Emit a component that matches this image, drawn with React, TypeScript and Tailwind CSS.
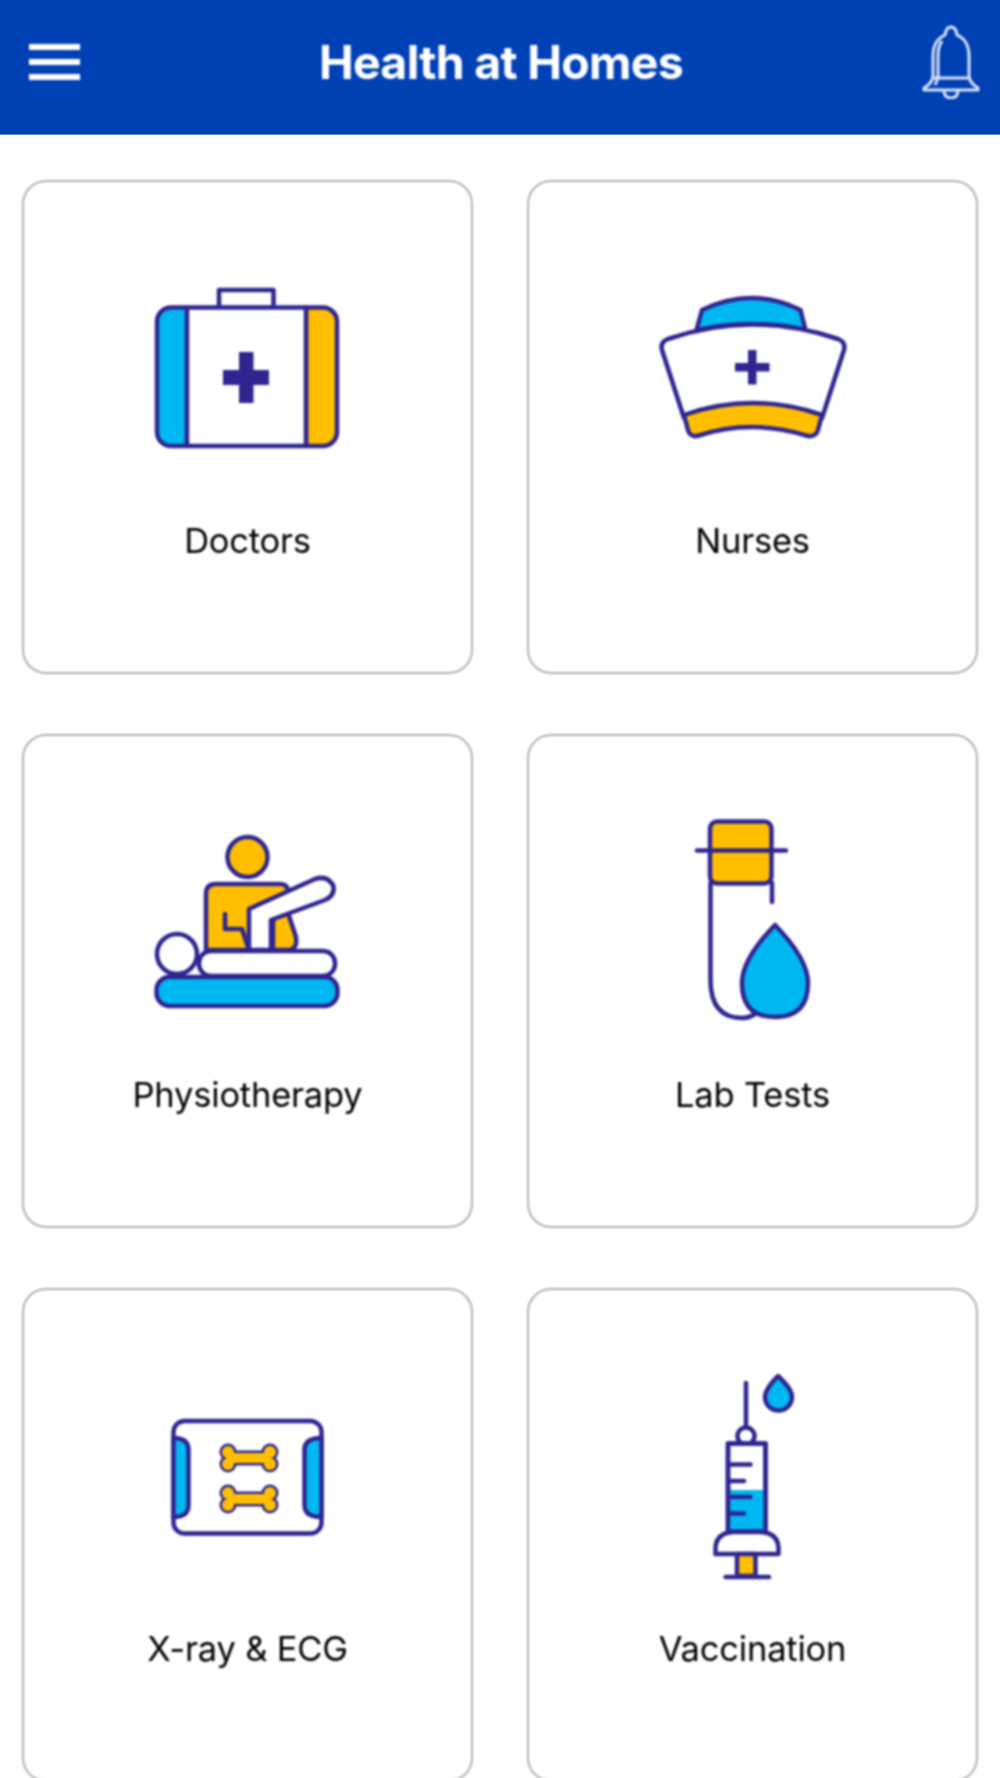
import React from "react";

const NAVY = "#2e2590";
const BLUE = "#00b8f1";
const YELLOW = "#ffbf00";

// All icons share one 220x220 box, centred in the card
const IconBox: React.FC<{ children: React.ReactNode }> = ({ children }) => (
  <svg
    viewBox="0 0 220 220"
    className="h-[220px] w-[220px]"
    fill="none"
    stroke={NAVY}
    strokeWidth={4.5}
    strokeLinejoin="round"
    strokeLinecap="round"
  >
    {children}
  </svg>
);

const DoctorsIcon = () => (
  <IconBox>
    <g transform="translate(-1 0)">
      <rect x="82" y="32" width="54.5" height="18" fill="#fff" />
      <path d="M50 49.5H34a14 14 0 0 0-14 14V174a14 14 0 0 0 14 14h16z" fill={BLUE} />
      <path d="M169 49.5h17a14 14 0 0 1 14 14V174a14 14 0 0 1-14 14h-17z" fill={YELLOW} />
      <rect x="50" y="49.5" width="119" height="138.5" fill="#fff" />
      <path
        d="M102 94h14.500v18h15.500v15h-15.500v18h-14.500v-18h-16v-15h16z"
        fill={NAVY}
        stroke="none"
      />
    </g>
  </IconBox>
);

const NursesIcon = () => (
  <IconBox>
    <path d="M53.500 72L59 52Q109 28 157.500 52L162.500 72Q109 60 53.500 72z" fill={BLUE} />
    <path
      d="M25 81Q109 52 195 81Q203 84 201 92L179 160Q109 132 41 160L19 92Q17 84 25 81z"
      fill="#fff"
    />
    <path
      d="M41 157Q109 133 179 157L175 172Q173 179 165 178Q109 160 54 178Q47 179 45 172z"
      fill={YELLOW}
    />
    <path
      d="M105 92h8.500v13h13v8.500h-13v13h-8.500v-13h-13v-8.500h13z"
      fill={NAVY}
      stroke="none"
    />
  </IconBox>
);

const PhysioIcon = () => (
  <IconBox>
    <circle cx="109.500" cy="45" r="20" fill={YELLOW} />
    <path d="M135 106l15-5 8 24q2 13-9 13h-14z" fill={YELLOW} />
    <path
      d="M68 138V82q0-10 10-10h64q8 0 8 8l-30 40v18z"
      fill={YELLOW}
    />
    <path d="M87 102v15h17l7 21" />
    <path
      d="M111 138V97l66-30q12-4 18 6 3 10-8 15l-54 20v30z"
      fill="#fff"
    />
    <rect x="61" y="139" width="136" height="25" rx="12" fill="#fff" />
    <circle cx="39" cy="142" r="20" fill="#fff" />
    <rect x="18.500" y="165" width="181" height="29" rx="13" fill={BLUE} />
  </IconBox>
);

const LabIcon = () => (
  <IconBox>
    <path d="M67.500 71v97q0 38 32 38 8 0 15-6M129 71v19" />
    <rect x="67" y="9.500" width="61.500" height="62" rx="7" fill={YELLOW} />
    <path d="M54 38.500h89" />
    <path
      d="M132 113Q165 147 165 171q0 34-33 34T99 171q0-24 33-58z"
      fill={BLUE}
    />
  </IconBox>
);

const Bone: React.FC<{ y: number }> = ({ y }) => {
  const parts = (
    <>
      <circle cx="-21" cy="-6" r="6" />
      <circle cx="-21" cy="6" r="6" />
      <circle cx="21" cy="-6" r="6" />
      <circle cx="21" cy="6" r="6" />
      <rect x="-22" y="-5" width="44" height="10" />
    </>
  );
  return (
    <g transform={`translate(111 ${y})`}>
      <g fill={NAVY} stroke={NAVY} strokeWidth={5}>{parts}</g>
      <g fill={YELLOW} stroke="none">{parts}</g>
    </g>
  );
};

const XrayIcon = () => (
  <IconBox>
    <g transform="translate(-1.500 0)">
      <rect x="37" y="55" width="148" height="112.500" rx="11" fill="#fff" />
      <path d="M37 72q15 0 15 12v55q0 12-15 12z" fill={BLUE} />
      <path d="M185 72q-17 0-17 12v55q0 12 17 12z" fill={BLUE} />
    </g>
    <Bone y={92} />
    <Bone y={133} />
  </IconBox>
);

const VaccineIcon = () => (
  <IconBox>
    <path d="M103 17v44" />
    <circle cx="103" cy="70" r="8.500" fill="#fff" />
    <rect x="85" y="77.500" width="37.500" height="88" fill="#fff" />
    <rect x="85" y="124" width="37.500" height="41.500" fill={BLUE} stroke="none" />
    <path d="M85 77.500h37.500v88H85z" />
    <path d="M85 98.500h22.500M85 115h16M85 131h22.500M85 147.500h16" />
    <path
      d="M72.500 188v-5q0-16 18-17h27q18 1 18 17v5z"
      fill="#fff"
    />
    <rect x="94" y="188" width="18.500" height="22" fill={YELLOW} />
    <path d="M82.500 211h43.500" />
    <path
      d="M135 10q14 13 14 21a13.500 13.500 0 0 1-27 0q0-8 13-21z"
      fill={BLUE}
    />
  </IconBox>
);

const services = [
  { label: "Doctors", icon: <DoctorsIcon /> },
  { label: "Nurses", icon: <NursesIcon /> },
  { label: "Physiotherapy", icon: <PhysioIcon /> },
  { label: "Lab Tests", icon: <LabIcon /> },
  { label: "X-ray & ECG", icon: <XrayIcon /> },
  { label: "Vaccination", icon: <VaccineIcon /> },
];

const App: React.FC = () => {
  return (
    <div className="h-[1778px] w-full overflow-hidden bg-white font-['Inter',sans-serif]">
      {/* Header */}
      <header className="relative flex h-[135px] items-center justify-between border-b border-[#5f86d2] bg-[#0040b5] pl-[29px] pr-[20px]">
        <div className="flex w-[51px] flex-col gap-[9px] pb-[11px] blur-[0.8px]">
          <span className="h-[6px] bg-white" />
          <span className="h-[6px] bg-white" />
          <span className="h-[6px] bg-white" />
        </div>
        <h1 className="pb-[10px] text-[46.5px] font-bold leading-[52px] tracking-[-0.7px] text-white blur-[0.8px]">
          Health at Homes
        </h1>
        <svg
          viewBox="0 0 58 74"
          className="mb-[11px] h-[74px] w-[58px] blur-[0.8px]"
          fill="none"
          stroke="#d8e3f6"
          strokeWidth={3}
          strokeLinejoin="round"
        >
          <path d="M29 2q5 0 6 8c9 4 12 11 12 21v19q0 8 9 13v2H2v-2q9-5 9-13V31c0-10 3-17 12-21q1-8 6-8z" />
          <path d="M20 16q-4 5-4 15v19q0 5-3 10" />
          <path d="M11 53h36" />
          <path d="M22 65q0 8 7 8t7-8" />
        </svg>
      </header>

      {/* Service cards */}
      <main className="grid grid-cols-2 gap-x-[54px] gap-y-[60px] px-[22px] pt-[45px] blur-[0.8px]">
        {services.map((service) => (
          <div
            key={service.label}
            className="flex h-[494px] flex-col items-center rounded-[24px] border-2 border-[#b0b0b0] pt-[76px]"
          >
            {service.icon}
            <span className="mt-[43px] text-[34.5px] leading-[40px] tracking-[-0.2px] text-black">
              {service.label}
            </span>
          </div>
        ))}
      </main>
    </div>
  );
};

export default App;
